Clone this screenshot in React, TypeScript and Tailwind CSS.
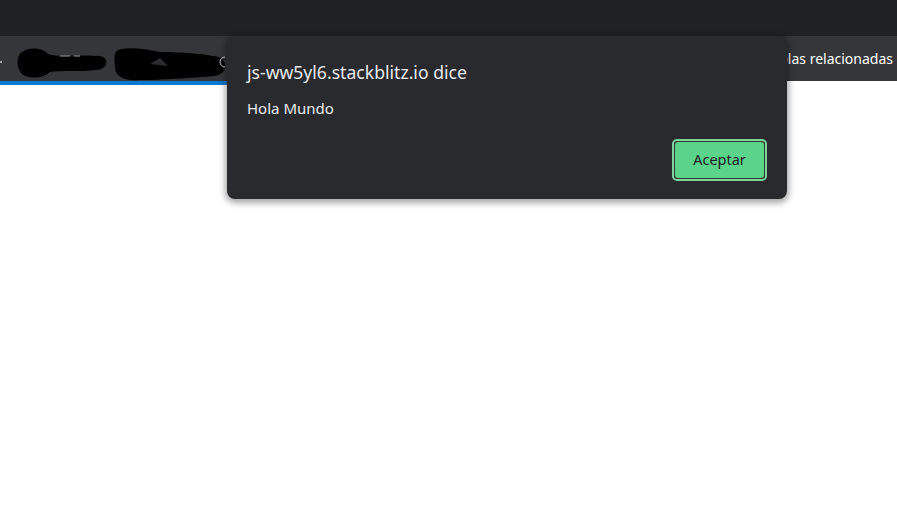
import React from "react";

const Scribbles = () => (
  <svg width="230" height="40" viewBox="0 0 230 40" className="absolute left-0 top-[8px]">
    <circle cx="1" cy="18" r="1" fill="#cfd0d2" />
    <path
      d="M22 8 C30 2 44 4 48 10 C60 14 80 10 100 12 C110 14 108 26 96 26 C80 28 60 26 50 28 C44 34 30 36 22 30 C16 24 16 12 22 8 Z"
      fill="#000"
    />
    <path d="M60 12 L70 12 M74 12 L80 12" stroke="#9fa2a6" strokeWidth="1" />
    <path
      d="M118 6 C130 2 150 6 160 8 C180 8 210 10 222 14 C228 22 226 30 214 32 C190 34 160 36 140 36 C122 38 114 30 115 22 C114 14 114 8 118 6 Z"
      fill="#000"
    />
    <path d="M150 20 L160 14 L168 22 Z" fill="#2b2c30" />
    <path d="M225 13 A5 5 0 1 0 225 23" stroke="#cfd0d2" strokeWidth="1" fill="none" />
  </svg>
);

export default function App() {
  return (
    <div
      className="relative w-[897px] h-[526px] overflow-hidden bg-white"
      style={{ fontFamily: '"Noto Sans", "Open Sans", sans-serif' }}
    >
      {/* browser chrome */}
      <div className="h-[36px] bg-[#202124]" />
      <div className="relative h-[45px] bg-[#35363a] flex items-center justify-end pr-[4px]">
        <Scribbles />
        <span className="text-[14px] text-white leading-none">Tablas relacionadas</span>
      </div>
      <div className="h-[4px] w-[240px] bg-[#0a78d0]" />

      {/* alert dialog */}
      <div className="absolute left-[227px] top-[36px] w-[560px] h-[163px] rounded-[8px] bg-[#292a2d] shadow-[0_2px_6px_2px_rgba(0,0,0,0.35)] flex flex-col px-[20px] pt-[23px] pb-[18px]">
        <div className="text-[17.6px] leading-[26px] text-[#e8eaed]">js-ww5yl6.stackblitz.io dice</div>
        <div className="mt-[13px] text-[15px] leading-[20px] text-[#e8eaed]">Hola Mundo</div>
        <div className="mt-auto flex justify-end">
          <div className="rounded-[5px] border-2 border-[#7fd39f] p-0">
            <button className="w-[91px] h-[38px] rounded-[4px] border border-[#2f3a33] bg-[#5bd38b] text-[14.5px] text-[#202124]">
              Aceptar
            </button>
          </div>
        </div>
      </div>
    </div>
  );
}
